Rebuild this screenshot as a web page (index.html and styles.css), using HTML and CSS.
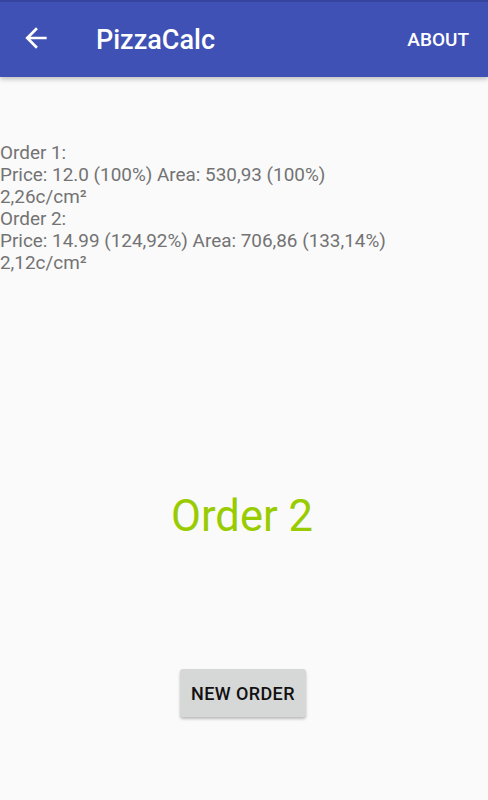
FILE: index.html
```html
<!DOCTYPE html>
<html lang="en">
<head>
  <meta charset="UTF-8">
  <meta name="viewport" content="width=device-width, initial-scale=1.0">
  <title>PizzaCalc</title>
  <link rel="stylesheet" href="styles.css">
</head>
<body>
  <div class="toolbar">
    <svg class="back" viewBox="0 0 24 24" width="32" height="32">
      <path fill="#fff" d="M20 11H7.83l5.59-5.59L12 4l-8 8 8 8 1.41-1.41L7.83 13H20v-2z"/>
    </svg>
    <div class="title">PizzaCalc</div>
    <div class="action">ABOUT</div>
  </div>

  <div class="content">
    <div class="summary">
      Order 1:<br>
      Price: 12.0 (100%) Area: 530,93 (100%)<br>
      2,26c/cm²<br>
      Order 2:<br>
      Price: 14.99 (124,92%) Area: 706,86 (133,14%)<br>
      2,12c/cm²
    </div>

    <div class="winner">Order 2</div>

    <button class="new-order">NEW ORDER</button>
  </div>
</body>
</html>
```

FILE: styles.css
```css
body {
  margin: 0;
  padding: 0;
  background-color: #fafafa;
  font-family: Roboto, "Noto Sans", sans-serif;
  height: 800px;
  overflow: hidden;
}
.toolbar {
  height: 75px;
  border-top: 2px solid #34449f;
  background-color: #3f51b5;
  color: #fff;
  display: flex;
  align-items: center;
  padding: 0 19px 0 20px;
  box-shadow: 0 2px 5px rgba(0, 0, 0, 0.25);
  position: relative;
}
.back {
  display: block;
  margin-top: -3px;
}
.title {
  margin-left: 44px;
  font-size: 27px;
  font-weight: 500;
  flex: 1;
}
.action {
  font-size: 19px;
  font-weight: 500;
}
.content {
  padding-top: 65px;
  display: flex;
  flex-direction: column;
  align-items: center;
}
.summary {
  align-self: stretch;
  font-size: 18.9px;
  line-height: 22px;
  color: #737373;
}
.winner {
  margin-top: 217px;
  margin-right: 4px;
  font-size: 43.5px;
  line-height: 52px;
  color: #99cc00;
}
.new-order {
  margin-top: 126px;
  margin-left: -2px;
  height: 48px;
  padding: 0 11px;
  border: none;
  border-radius: 3px;
  background-color: #d6d7d7;
  color: #111;
  font-family: Roboto, "Noto Sans", sans-serif;
  font-size: 18px;
  font-weight: 500;
  letter-spacing: 0.4px;
  box-shadow: 0 2px 3px rgba(0, 0, 0, 0.25);
}
```
